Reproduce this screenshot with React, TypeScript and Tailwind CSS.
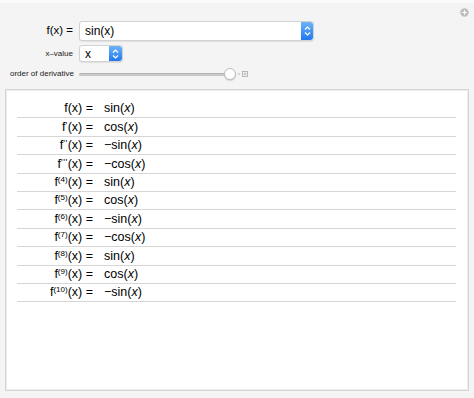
import React from 'react';

type Row = { sup?: string; prime?: number; value: string; neg?: boolean };

const rows: Row[] = [
  { value: 'sin' },
  { prime: 1, value: 'cos' },
  { prime: 2, value: 'sin', neg: true },
  { prime: 3, value: 'cos', neg: true },
  { sup: '(4)', value: 'sin' },
  { sup: '(5)', value: 'cos' },
  { sup: '(6)', value: 'sin', neg: true },
  { sup: '(7)', value: 'cos', neg: true },
  { sup: '(8)', value: 'sin' },
  { sup: '(9)', value: 'cos' },
  { sup: '(10)', value: 'sin', neg: true },
];

// blue up/down stepper used on the popup menus
function Stepper({ w }: { w: string }) {
  return (
    <div
      className={`${w} h-full rounded-r-[3px] bg-gradient-to-b from-[#6cb3fa] to-[#1f78ef] flex items-center justify-center`}
    >
      <svg width="7" height="12" viewBox="0 0 7 12" fill="none" stroke="white" strokeWidth="1.2">
        <path d="M1 4.5 L3.5 2 L6 4.5" />
        <path d="M1 7.5 L3.5 10 L6 7.5" />
      </svg>
    </div>
  );
}

export default function App() {
  return (
    <div className="relative w-[474px] h-[398px] bg-[#f4f4f4] border-t-[3px] border-[#fbfbfb] font-['Liberation_Sans',Arial,sans-serif] text-black">
      {/* options button */}
      <div className="absolute right-[5px] top-[5px]">
        <svg width="9" height="9" viewBox="0 0 9 9">
          <circle cx="4.5" cy="4.5" r="4.2" fill="#bdbdbd" />
          <path d="M4.5 2.3 V6.7 M2.3 4.5 H6.7" stroke="white" strokeWidth="1.2" />
        </svg>
      </div>

      {/* controls */}
      <div className="pt-[18px]">
        <div className="flex items-center h-[20px]">
          <div className="w-[73px] text-right text-[11.5px] leading-none">f(x) =</div>
          <div className="ml-[6px] w-[235px] h-[20px] flex bg-white border border-[#d2d2d2] rounded-[3px] shadow-[0_1px_1px_rgba(0,0,0,0.08)]">
            <div className="flex-1 flex items-center pl-[5px] text-[12px]">sin(x)</div>
            <Stepper w="w-[12px]" />
          </div>
        </div>

        <div className="flex items-center h-[17px] mt-[4px]">
          <div className="w-[73px] text-right text-[8px] leading-none text-[#222]">x–value</div>
          <div className="ml-[6px] w-[44px] h-[17px] flex bg-white border border-[#d2d2d2] rounded-[3px] shadow-[0_1px_1px_rgba(0,0,0,0.08)]">
            <div className="flex-1 flex items-center pl-[5px] text-[12px]">x</div>
            <Stepper w="w-[13px]" />
          </div>
        </div>

        <div className="flex items-center h-[12px] mt-[6px]">
          <div className="w-[74px] text-right text-[8px] leading-none text-[#222]">order of derivative</div>
          <div className="relative ml-[5px] w-[157px] h-[12px] flex items-center">
            <div className="w-full h-[3px] rounded-full bg-[#c9c9c9] shadow-[inset_0_1px_0_rgba(0,0,0,0.1)]" />
            <div className="absolute right-0 top-0 w-[12px] h-[12px] rounded-full bg-white border border-[#bdbdbd] shadow-[0_1px_1px_rgba(0,0,0,0.15)]" />
          </div>
          <svg className="ml-[1px]" width="12" height="8" viewBox="0 0 12 8">
            <circle cx="2" cy="4" r="0.8" fill="#aaa" />
            <rect x="5.5" y="1.5" width="5" height="5" fill="#f0f0f0" stroke="#aaa" strokeWidth="0.8" />
            <path d="M8 2.7 V5.3 M6.7 4 H9.3" stroke="#aaa" strokeWidth="0.7" />
          </svg>
        </div>
      </div>

      {/* output */}
      <div className="mt-[9px] mx-[5px] h-[302px] bg-white border border-[#d4d4d4] shadow-[inset_0_0_0_1px_#ececec]">
        <div className="pt-[10px] ml-[11px] mr-[12px]">
          {rows.map((r, i) => (
            <div key={i} className="flex items-center h-[18.4px] border-b border-[#d6d6d6] text-[12.5px] leading-none">
              <div className="w-[76px] text-right whitespace-nowrap">
                f
                {r.prime && (
                  <span className="text-[9px] tracking-[0.5px] align-[3px]">{"'".repeat(r.prime)}</span>
                )}
                {r.sup && <sup className="text-[8px] top-[-0.5em]">{r.sup}</sup>}
                (x) =
              </div>
              <div className="ml-[11px] whitespace-nowrap">
                {r.neg ? '−' : ''}
                {r.value}(<i>x</i>)
              </div>
            </div>
          ))}
        </div>
      </div>
    </div>
  );
}
